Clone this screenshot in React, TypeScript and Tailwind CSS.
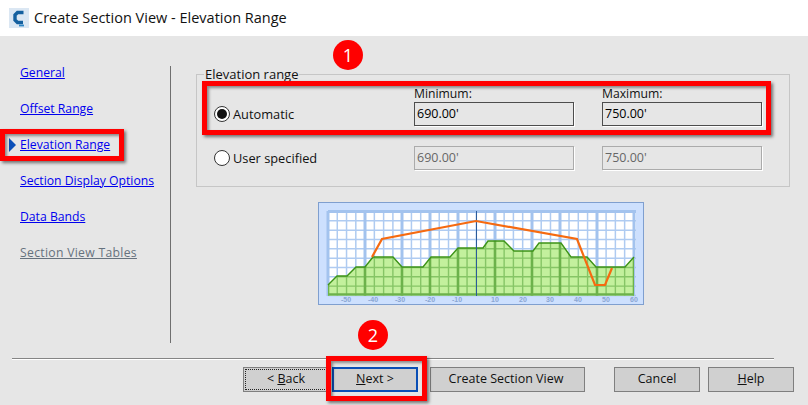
const navItems = [
  { label: 'General' },
  { label: 'Offset Range' },
  { label: 'Elevation Range', active: true },
  { label: 'Section Display Options' },
  { label: 'Data Bands' },
  { label: 'Section View Tables', disabled: true },
];

const thickX = [10, 47, 84, 112, 140, 177, 214, 242, 279, 316];
const gridX = Array.from({ length: 34 }, (_, i) => 10 + i * 9.27);
const gridY = Array.from({ length: 10 }, (_, i) => 9.5 + i * 9.33);

const terrain =
  '10,83 19,74 29,74 38,65 47,65 55,55 75,55 84,65 105,65 113,55 132,55 140,46 165,46 170,39 186,39 196,49 215,49 221,41 243,41 253,55 269,55 278,65 307,65 316,55';

const axisLabels = [
  ['-50', 28],
  ['-40', 55],
  ['-30', 82],
  ['-20', 112],
  ['-10', 139],
  ['10', 177],
  ['20', 205],
  ['30', 232],
  ['40', 260],
  ['50', 288],
  ['60', 316],
] as const;

function ElevationChart() {
  return (
    <svg width="326" height="103" viewBox="0 0 326 103" className="block">
      <rect x="0.5" y="0.5" width="325" height="102" fill="#cde0fe" stroke="#7f9fcf" />
      <clipPath id="ground">
        <polygon points={`${terrain} 316,93.5 10,93.5`} />
      </clipPath>
      <rect x="10" y="9" width="308" height="85" fill="#ffffff" />
      {gridX.map((x) => (
        <line key={x} x1={x} x2={x} y1="9" y2="94" stroke="#afcbf1" strokeWidth="1.5" />
      ))}
      {gridY.map((y) => (
        <line key={y} x1="10" x2="318" y1={y} y2={y} stroke="#afcbf1" strokeWidth="1.5" />
      ))}
      {thickX.map((x) => (
        <line key={x} x1={x} x2={x} y1="9" y2="94" stroke="#a3c3ee" strokeWidth="3" />
      ))}
      <line x1="10" x2="318" y1="9.5" y2="9.5" stroke="#a3c3ee" strokeWidth="3" />
      <g clipPath="url(#ground)">
        <rect x="10" y="9" width="308" height="85" fill="#c3f09d" />
        {gridX.map((x) => (
          <line key={x} x1={x} x2={x} y1="9" y2="94" stroke="#86c566" strokeWidth="1.4" />
        ))}
        {gridY.map((y) => (
          <line key={y} x1="10" x2="318" y1={y} y2={y} stroke="#86c566" strokeWidth="1.4" />
        ))}
        {thickX.map((x) => (
          <line key={x} x1={x} x2={x} y1="9" y2="94" stroke="#6cb24b" strokeWidth="2.6" />
        ))}
        <line x1="10" x2="318" y1="92.5" y2="92.5" stroke="#6cb24b" strokeWidth="2.4" />
      </g>
      <polyline points={terrain} fill="none" stroke="#3c9317" strokeWidth="1.4" />
      <line x1="158.5" x2="158.5" y1="9" y2="94" stroke="#2b5b9b" strokeWidth="1" />
      <polyline
        points="54,55 64,37 158,19 259,37 277,83 287,83 294,66"
        fill="none"
        stroke="#f66a10"
        strokeWidth="2.2"
      />
      {axisLabels.map(([label, x]) => (
        <text
          key={label}
          x={x}
          y="100"
          textAnchor="middle"
          fontSize="7"
          fontWeight="700"
          fill="#8ba6d2"
          fontFamily="'Liberation Sans', sans-serif"
        >
          {label}
        </text>
      ))}
    </svg>
  );
}

function AppIcon() {
  return (
    <svg width="20" height="20" viewBox="0 0 20 20" className="block">
      <rect width="20" height="20" fill="#dbe7f3" />
      <path d="M14.5 4.5 H8.5 L6 7 V12 L8.5 14.5 H14" fill="none" stroke="#14609f" strokeWidth="3.4" />
      <path d="M10 17.5 H15" stroke="#2f86c4" strokeWidth="1.8" />
    </svg>
  );
}

function Radio({ checked, label }: { checked?: boolean; label: string }) {
  return (
    <div className="flex items-center">
      <span className="flex h-4 w-4 items-center justify-center rounded-full border border-[#333333] bg-white">
        {checked && <span className="h-[10px] w-[10px] rounded-full bg-[#111111]" />}
      </span>
      <span className="ml-[3px] pt-[2px] text-[12.8px] text-[#111111]">{label}</span>
    </div>
  );
}

function ValueBox({ value, disabled }: { value: string; disabled?: boolean }) {
  return disabled ? (
    <div className="flex h-6 w-40 items-center border border-[#ababab] bg-[#e6e6e6] pl-[2px] text-[12.5px] text-[#666666] shadow-[1px_1px_0_#ffffff]">
      {value}
    </div>
  ) : (
    <div className="flex h-6 w-40 items-center border border-[#4d4d4d] bg-[#e6e6e6] pl-[2px] text-[12.5px] text-black shadow-[1px_1px_0_#ffffff]">
      {value}
    </div>
  );
}

function DialogButton({ className, children }: { className: string; children: React.ReactNode }) {
  return (
    <div
      className={`flex h-[25px] items-center justify-center bg-[#d0d0d0] text-[12.5px] text-[#111111] ${className}`}
    >
      {children}
    </div>
  );
}

const calloutBox = 'absolute border-[5px] border-[#ff0000] shadow-[2px_2px_3px_#00000080,inset_2px_2px_3px_#00000066]';
const badge =
  'absolute flex h-[30px] w-[30px] items-center justify-center rounded-full bg-[#ff0000] text-[18px] text-white';

export default function App() {
  return (
    <div className="relative h-[405px] w-[808px] overflow-hidden bg-[#e6e6e6] font-['Open_Sans',sans-serif]">
      <div className="flex h-9 items-center bg-white pl-[9px]">
        <AppIcon />
        <span className="ml-[5px] text-[14.5px] text-[#111111]">Create Section View - Elevation Range</span>
      </div>

      <div className="flex h-[322px]">
        <div className="w-[170px] pt-[19px] pl-5">
          {navItems.map((item) => (
            <div key={item.label} className="relative flex h-9 items-center">
              {item.active && (
                <span className="absolute left-[-11px] h-0 w-0 border-y-[7px] border-l-[7px] border-y-transparent border-l-[#0b4fb8]" />
              )}
              <span
                className={`text-[12.2px] underline ${item.disabled ? 'tracking-[0.3px] text-[#66727e]' : 'text-[#0000ee]'}`}
              >
                {item.label}
              </span>
            </div>
          ))}
        </div>
        <div className="mt-[30px] mb-[15px] w-px bg-[#6f6f6f]" />

        <div className="pt-[31px] pl-[25px]">
          <fieldset className="h-[120px] w-[594px] border border-[#c6c6c6]">
            <legend className="ml-[7px] px-px text-[13px] leading-[14px] text-[#111111]">Elevation range</legend>
            <div className="grid grid-cols-[172px_160px_160px] gap-x-[28px] pl-[17px]">
              <div />
              <div className="mt-[5px] h-[16px] text-[12.2px] leading-[16px] text-[#111111]">Minimum:</div>
              <div className="mt-[5px] h-[16px] text-[12.2px] leading-[16px] text-[#111111]">Maximum:</div>
              <div className="flex h-6 items-center">
                <Radio checked label="Automatic" />
              </div>
              <ValueBox value="690.00'" />
              <ValueBox value="750.00'" />
              <div className="mt-5 flex h-6 items-center">
                <Radio label="User specified" />
              </div>
              <div className="mt-5">
                <ValueBox value="690.00'" disabled />
              </div>
              <div className="mt-5">
                <ValueBox value="750.00'" disabled />
              </div>
            </div>
          </fieldset>
          <div className="mt-[15px] ml-[122px]">
            <ElevationChart />
          </div>
        </div>
      </div>

      <div className="ml-3 h-[2px] w-[762px] border-t border-[#858585] bg-white" />

      <div className="mt-[7px] flex pl-[243px]">
        <DialogButton className="w-[86px] border border-[#7f7f7f] outline-1 outline-dotted -outline-offset-3 outline-[#222222]">
          <span>
            &lt; <span className="underline">B</span>ack
          </span>
        </DialogButton>
        <DialogButton className="ml-[3px] w-[86px] border-2 border-[#0a4fb5]">
          <span>
            <span className="underline">N</span>ext &gt;
          </span>
        </DialogButton>
        <DialogButton className="ml-3 w-[155px] border border-[#7f7f7f] pr-[3px]">Create Section View</DialogButton>
        <DialogButton className="ml-[29px] w-[86px] border border-[#7f7f7f]">Cancel</DialogButton>
        <DialogButton className="ml-2 w-[86px] border border-[#7f7f7f]">
          <span>
            <span className="underline">H</span>elp
          </span>
        </DialogButton>
      </div>

      {/* red annotations drawn over the dialog */}
      <div className={`${calloutBox} top-[129px] left-0 h-8 w-[124px]`} />
      <div className={`${calloutBox} top-[81px] left-[202px] h-[54px] w-[569px]`} />
      <div className={`${calloutBox} top-[356px] left-[326px] h-[45px] w-[101px]`} />
      <div className={`${badge} top-[40px] left-[333px]`}>1</div>
      <div className={`${badge} top-[320px] left-[358px]`}>2</div>
    </div>
  );
}
